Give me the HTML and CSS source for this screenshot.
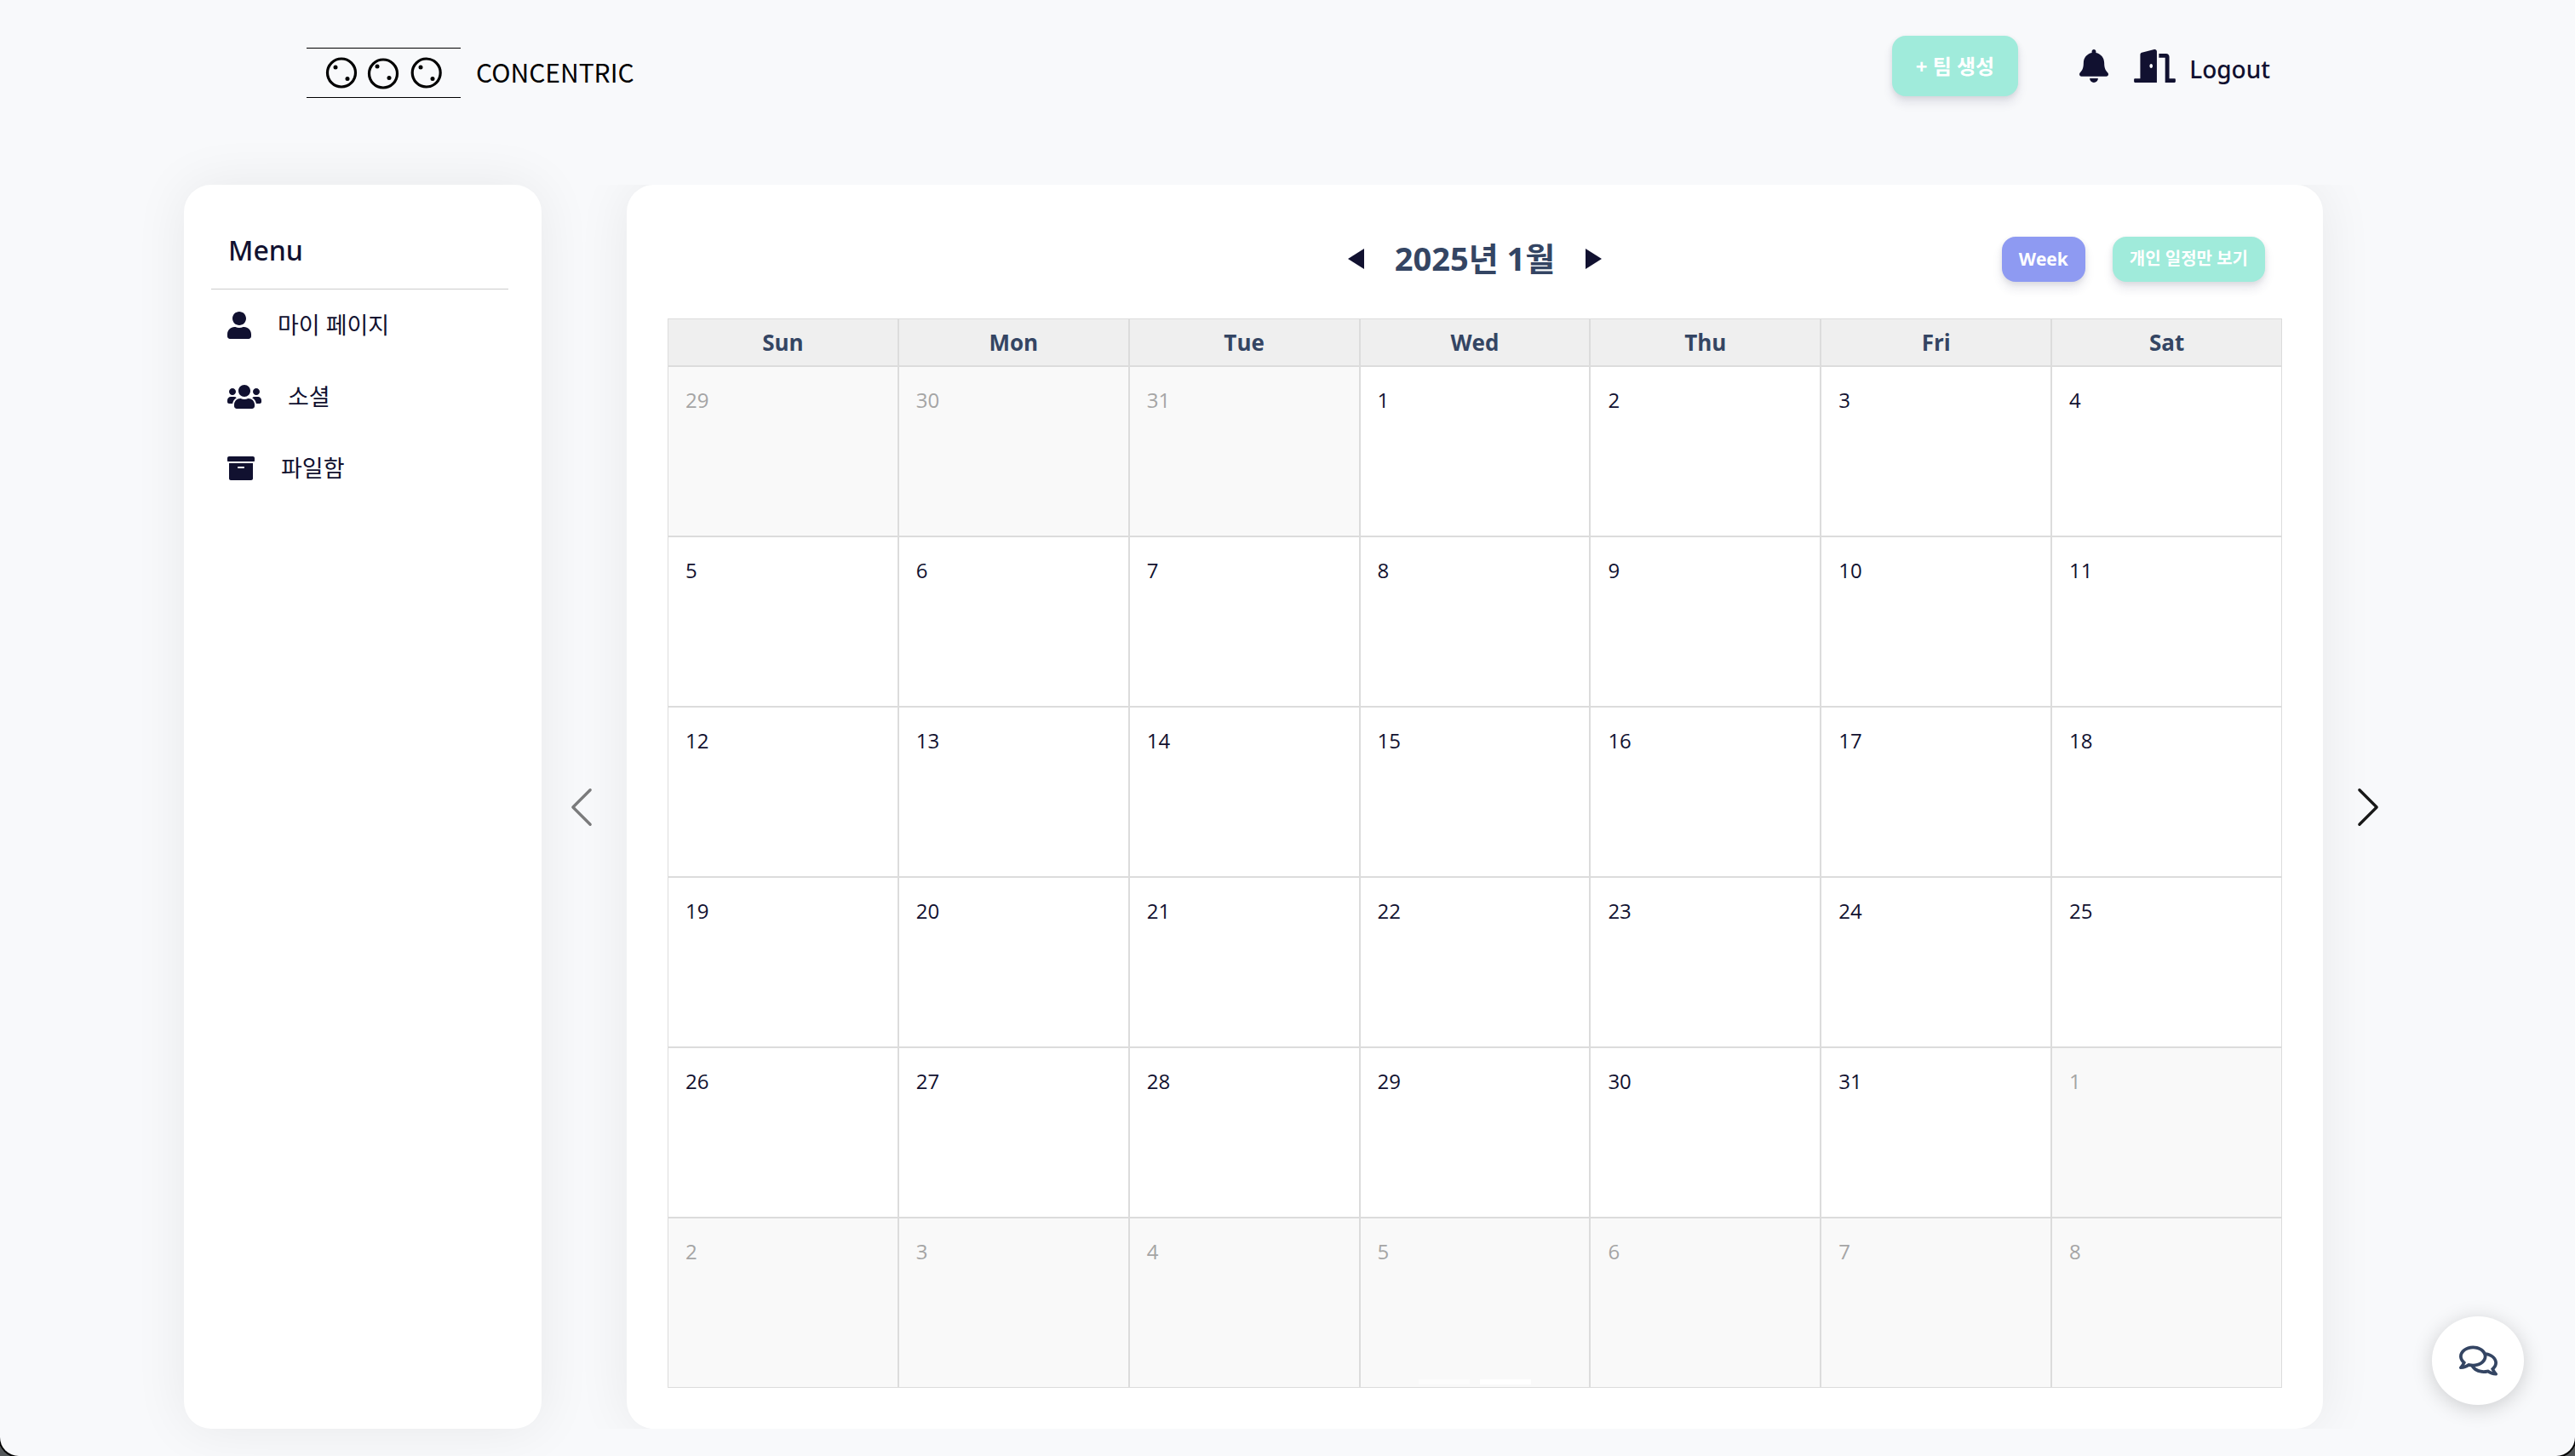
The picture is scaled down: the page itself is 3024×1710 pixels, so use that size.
FILE: index.html
```html
<!DOCTYPE html>
<html lang="ko">
<head>
<meta charset="utf-8">
<title>Concentric</title>
<link rel="stylesheet" href="styles.css">
</head>
<body>
<div class="page">
  <header class="header">
    <a class="logo" href="#">
      <svg class="logo-mark" width="181" height="60" viewBox="0 0 181 60" fill="none" stroke="#000" aria-hidden="true">
        <path d="M0 .5h181M0 58.500h181" stroke-width="1"/>
        <g stroke-width="3.200"><circle cx="41" cy="29.500" r="16.500"/><circle cx="90" cy="30.500" r="16.500"/><circle cx="140.700" cy="29.500" r="16.500"/></g>
        <g fill="#000" stroke="none"><circle cx="34" cy="23" r="2.500"/><circle cx="48" cy="36.500" r="2.500"/><circle cx="83" cy="22" r="2.500"/><circle cx="97" cy="35.500" r="2.500"/><circle cx="134" cy="23" r="2.500"/><circle cx="148" cy="36.500" r="2.500"/></g>
      </svg>
      <span class="logo-text">CONCENTRIC</span>
    </a>
    <div class="actions">
      <button class="btn btn-large mint" type="button">+ 팀 생성</button>
      <button class="plain bell" type="button" aria-label="알림">
        <svg width="34" height="39" viewBox="0 0 448 512" fill="currentColor"><path d="M224 512c35.320 0 63.970-28.650 63.970-64H160.030c0 35.350 28.650 64 63.970 64zm215.390-149.710c-19.320-20.760-55.470-51.990-55.470-154.290 0-77.700-54.480-139.900-127.940-155.160V32c0-17.670-14.320-32-31.980-32s-31.980 14.330-31.980 32v20.840C118.560 68.100 64.080 130.300 64.080 208c0 102.300-36.150 133.530-55.470 154.290-6 6.450-8.660 14.160-8.610 21.710.11 16.400 12.980 32 32.100 32h383.800c19.120 0 32-15.600 32.100-32 .05-7.550-2.610-15.270-8.610-21.710z"/></svg>
      </button>
      <button class="plain logout" type="button">
        <svg width="49" height="39" viewBox="0 0 640 512" fill="currentColor" aria-hidden="true"><path d="M624 448h-80V113.450C544 86.190 522.470 64 496 64H384v64h96v384h144c8.840 0 16-7.160 16-16v-32c0-8.840-7.160-16-16-16zM312.240 1.010l-192 49.740C105.990 54.440 96 67.700 96 82.920V448H16c-8.840 0-16 7.160-16 16v32c0 8.840 7.160 16 16 16h336V33.180c0-21.580-19.560-37.410-39.760-32.170zM264 288c-13.250 0-24-14.330-24-32s10.750-32 24-32 24 14.330 24 32-10.750 32-24 32z"/></svg>
        <span>Logout</span>
      </button>
    </div>
  </header>

  <div class="content">
    <aside class="sidebar">
      <h2 class="menu-title">Menu</h2>
      <nav class="menu">
        <a class="menu-item" href="#"><svg width="28" height="32" viewBox="0 0 448 512" fill="currentColor" aria-hidden="true"><path d="M224 256c70.700 0 128-57.300 128-128S294.700 0 224 0 96 57.300 96 128s57.300 128 128 128zm89.600 32h-16.700c-22.200 10.200-46.900 16-72.900 16s-50.600-5.800-72.900-16h-16.700C60.200 288 0 348.200 0 422.400V464c0 26.500 21.500 48 48 48h352c26.500 0 48-21.500 48-48v-41.600c0-74.200-60.200-134.400-134.400-134.400z"/></svg>마이 페이지</a>
        <a class="menu-item" href="#"><svg width="40" height="32" viewBox="0 0 640 512" fill="currentColor" aria-hidden="true"><path d="M96 224c35.300 0 64-28.700 64-64s-28.700-64-64-64-64 28.700-64 64 28.700 64 64 64zm448 0c35.300 0 64-28.700 64-64s-28.700-64-64-64-64 28.700-64 64 28.700 64 64 64zm32 32h-64c-17.600 0-33.500 7.100-45.100 18.600 40.300 22.100 68.900 62 75.100 109.400h66c17.700 0 32-14.300 32-32v-32c0-35.300-28.700-64-64-64zm-256 0c61.900 0 112-50.100 112-112S381.900 32 320 32 208 82.100 208 144s50.100 112 112 112zm76.800 32h-8.300c-20.800 10-43.900 16-68.500 16s-47.600-6-68.500-16h-8.300C179.600 288 128 339.600 128 403.200V432c0 26.500 21.500 48 48 48h288c26.500 0 48-21.500 48-48v-28.800c0-63.600-51.600-115.200-115.200-115.200zm-223.700-13.400C161.500 263.100 145.600 256 128 256H64c-35.300 0-64 28.700-64 64v32c0 17.700 14.300 32 32 32h65.900c6.300-47.400 34.900-87.300 75.200-109.400z"/></svg>소셜</a>
        <a class="menu-item" href="#"><svg width="32" height="32" viewBox="0 0 512 512" fill="currentColor" aria-hidden="true"><path d="M32 448c0 17.700 14.300 32 32 32h384c17.700 0 32-14.300 32-32V160H32v288zm160-212c0-6.600 5.400-12 12-12h104c6.600 0 12 5.400 12 12v8c0 6.600-5.400 12-12 12H204c-6.600 0-12-5.400-12-12v-8zM480 32H32C14.300 32 0 46.300 0 64v48c0 8.800 7.200 16 16 16h480c8.800 0 16-7.200 16-16V64c0-17.700-14.300-32-32-32z"/></svg>파일함</a>
      </nav>
    </aside>

    <button class="plain slide-prev" type="button" aria-label="이전">
      <svg width="54" height="54" viewBox="0 0 16 16" fill="currentColor"><path d="M11.354 1.646a.5.5 0 0 1 0 .708L5.707 8l5.647 5.646a.5.5 0 0 1-.708.708l-6-6a.5.5 0 0 1 0-.708l6-6a.5.5 0 0 1 .708 0z"/></svg>
    </button>

    <main class="card">
      <div class="toolbar">
        <div class="month">
          <button class="plain" type="button" aria-label="이전 달"><svg width="19" height="24" viewBox="0 0 19 24" fill="currentColor"><path d="M19 0v24L0 12z"/></svg></button>
          <h1 class="month-title">2025년 1월</h1>
          <button class="plain" type="button" aria-label="다음 달"><svg width="19" height="24" viewBox="0 0 19 24" fill="currentColor"><path d="M0 0v24l19-12z"/></svg></button>
        </div>
        <div class="filters">
          <button class="btn violet" type="button">Week</button>
          <button class="btn mint korean" type="button">개인 일정만 보기</button>
        </div>
      </div>
      <table class="calendar">
        <thead><tr><th>Sun</th><th>Mon</th><th>Tue</th><th>Wed</th><th>Thu</th><th>Fri</th><th>Sat</th></tr></thead>
        <tbody>
          <tr><td class="other">29</td><td class="other">30</td><td class="other">31</td><td>1</td><td>2</td><td>3</td><td>4</td></tr>
          <tr><td>5</td><td>6</td><td>7</td><td>8</td><td>9</td><td>10</td><td>11</td></tr>
          <tr><td>12</td><td>13</td><td>14</td><td>15</td><td>16</td><td>17</td><td>18</td></tr>
          <tr><td>19</td><td>20</td><td>21</td><td>22</td><td>23</td><td>24</td><td>25</td></tr>
          <tr><td>26</td><td>27</td><td>28</td><td>29</td><td>30</td><td>31</td><td class="other">1</td></tr>
          <tr><td class="other">2</td><td class="other">3</td><td class="other">4</td><td class="other">5</td><td class="other">6</td><td class="other">7</td><td class="other">8</td></tr>
        </tbody>
      </table>
      <div class="indicators">
        <button class="indicator" type="button" aria-label="슬라이드 1"></button>
        <button class="indicator active" type="button" aria-label="슬라이드 2"></button>
      </div>
    </main>

    <button class="plain slide-next" type="button" aria-label="다음">
      <svg width="54" height="54" viewBox="0 0 16 16" fill="currentColor"><path d="M4.646 1.646a.5.5 0 0 1 .708 0l6 6a.5.5 0 0 1 0 .708l-6 6a.5.5 0 0 1-.708-.708L10.293 8 4.646 2.354a.5.5 0 0 1 0-.708z"/></svg>
    </button>
  </div>
</div>

<button class="chat" type="button" aria-label="채팅">
  <svg width="45" height="40" viewBox="0 0 576 512" fill="currentColor"><path d="M532 386.200c27.500-27.100 44-61.100 44-98.200 0-80-76.500-146.100-176.200-157.900C368.300 72.500 294.300 32 208 32 93.100 32 0 103.600 0 192c0 37 16.500 71 44 98.200-15.300 30.700-37.300 54.500-37.700 54.900-6.300 6.700-8.100 16.500-4.400 25 3.600 8.500 12 14 21.200 14 53.500 0 96.700-20.200 125.200-38.800 9.200 2.100 18.700 3.700 28.400 4.900C208.100 407.600 281.800 448 368 448c20.800 0 40.800-2.400 59.800-6.800C456.300 459.700 499.400 480 553 480c9.200 0 17.500-5.500 21.200-14 3.600-8.500 1.900-18.300-4.400-25-.4-.3-22.500-24.100-37.800-54.800zm-392.800-92.300L122.100 305c-14.100 9.100-28.500 16.300-43.100 21.400 2.700-4.700 5.400-9.700 8-14.800l15.500-31.100L77.700 256C64.200 242.600 48 220.700 48 192c0-60.700 73.300-112 160-112s160 51.300 160 112-73.300 112-160 112c-16.500 0-33-1.900-49-5.600l-19.800-4.500zM498.300 352l-24.700 24.400 15.500 31.100c2.600 5.100 5.300 10.100 8 14.800-14.600-5.100-29-12.300-43.100-21.400l-17.100-11.100-19.900 4.600c-16 3.700-32.500 5.600-49 5.600-54 0-102.200-20.100-131.300-49.700C338 339.500 416 272.900 416 192c0-3.400-.4-6.700-.7-10C479.700 196.500 528 238.800 528 288c0 28.700-16.200 50.600-29.700 64z"/></svg>
</button>
</body>
</html>
```

FILE: styles.css
```css
* {
  box-sizing: border-box;
}

html {
  background: #54585a;
}

body {
  margin: 0;
  font-family: "Open Sans", "Noto Sans CJK KR", sans-serif;
  color: #111130;
}

button {
  font-family: inherit;
  color: inherit;
  border: 0;
  cursor: pointer;
}

a {
  color: inherit;
  text-decoration: none;
}

svg {
  display: block;
  flex: none;
}

.page {
  min-height: 100vh;
  background: #f8f9fb;
  border-radius: 0 0 22px 22px;
  box-shadow: 0 0 0 2px #000;
  overflow: hidden;
}

.plain {
  padding: 0;
  background: none;
}

/* Header */

.header {
  display: flex;
  justify-content: space-between;
  padding: 42px 358px 0 360px;
  height: 217px;
}

.logo {
  display: flex;
  align-items: center;
  gap: 18px;
  height: 88px;
}

.logo-text {
  padding-bottom: 4px;
  font-family: "Noto Sans CJK KR", sans-serif;
  font-size: 30px;
  line-height: 40px;
  color: #000;
}

.actions {
  display: flex;
  align-items: flex-start;
}

.btn {
  height: 53px;
  padding: 0 20px;
  border-radius: 16px;
  font-size: 21px;
  font-weight: 700;
  line-height: 32px;
  color: #fff;
  box-shadow: 0 8px 12px rgba(50, 50, 93, 0.11), 0 2px 6px rgba(0, 0, 0, 0.08);
}

.btn-large {
  height: 71px;
  padding: 0 28px;
  font-size: 24px;
}

.korean {
  font-size: 20px;
}

.mint {
  background: #a0ebdb;
}

.violet {
  background: #8e9af2;
}

.bell {
  margin: 16px 30px 0 72px;
}

.logout {
  display: flex;
  align-items: flex-start;
  gap: 16px;
  margin-top: 16px;
  font-family: "Noto Sans", sans-serif;
  font-size: 28px;
  font-weight: 500;
  line-height: 46px;
}

/* Content */

.content {
  display: flex;
  padding: 0 190px 32px 216px;
}

.sidebar {
  flex: none;
  width: 420px;
  padding: 56px 39px 0 32px;
  border-radius: 32px;
  background: #fff;
  box-shadow: 0 0 64px rgba(0, 0, 0, 0.07);
}

.menu-title {
  margin: 0;
  padding: 0 20px 24px;
  border-bottom: 1px solid #ccc;
  font-family: "Noto Sans", sans-serif;
  font-size: 32px;
  font-weight: 500;
  line-height: 42px;
}

.menu-item {
  display: flex;
  align-items: center;
  gap: 31px;
  height: 84px;
  padding-left: 19px;
  font-size: 27px;
  line-height: 40px;
}

.slide-prev,
.slide-next {
  display: flex;
  flex: none;
  align-items: center;
  justify-content: center;
  width: 100px;
  color: #000;
}

.slide-prev {
  padding-right: 6px;
  opacity: 0.5;
}

.slide-next {
  width: 106px;
  opacity: 0.9;
}

.card {
  position: relative;
  flex: 1;
  min-width: 0;
  padding: 60px 48px 48px;
  border-radius: 32px;
  background: #fff;
  box-shadow: 0 0 64px rgba(0, 0, 0, 0.07);
  clip-path: inset(0 -80px 0 -80px);
}

.toolbar {
  display: grid;
  grid-template-columns: 1fr auto 1fr;
  align-items: center;
  height: 53px;
  margin-bottom: 44px;
}

.month {
  display: flex;
  grid-column: 2;
  align-items: center;
  gap: 36px;
}

.month-title {
  margin: 0;
  padding-bottom: 2px;
  font-size: 38px;
  font-weight: 700;
  line-height: 52px;
  color: #344563;
}

.filters {
  display: flex;
  justify-content: flex-end;
  gap: 32px;
  padding-right: 20px;
}

.calendar {
  width: 100%;
  table-layout: fixed;
  border-collapse: separate;
  border-spacing: 0;
}

.calendar th,
.calendar td {
  border: 1px solid #dcdcdc;
}

.calendar th {
  height: 56px;
  padding: 0;
  background: #efefef;
  font-size: 26px;
  font-weight: 700;
  line-height: 36px;
  color: #344563;
}

.calendar td {
  height: 200px;
  padding: 22px 20px;
  vertical-align: top;
  font-size: 24px;
  line-height: 34px;
}

.calendar .other {
  background: #f9f9f9;
  color: #a5a5a5;
}

.indicators {
  position: absolute;
  right: 0;
  bottom: 52px;
  left: 0;
  display: flex;
  justify-content: center;
  gap: 12px;
}

.indicator {
  width: 60px;
  height: 6px;
  padding: 0;
  background: #fff;
  opacity: 0.5;
}

.indicator.active {
  opacity: 1;
}

/* Floating chat button */

.chat {
  position: fixed;
  right: 60px;
  bottom: 60px;
  display: flex;
  align-items: center;
  justify-content: center;
  width: 108px;
  height: 104px;
  padding: 0;
  border-radius: 50%;
  background: #fff;
  color: #344563;
  box-shadow: 0 4px 24px rgba(0, 0, 0, 0.18);
}
```
